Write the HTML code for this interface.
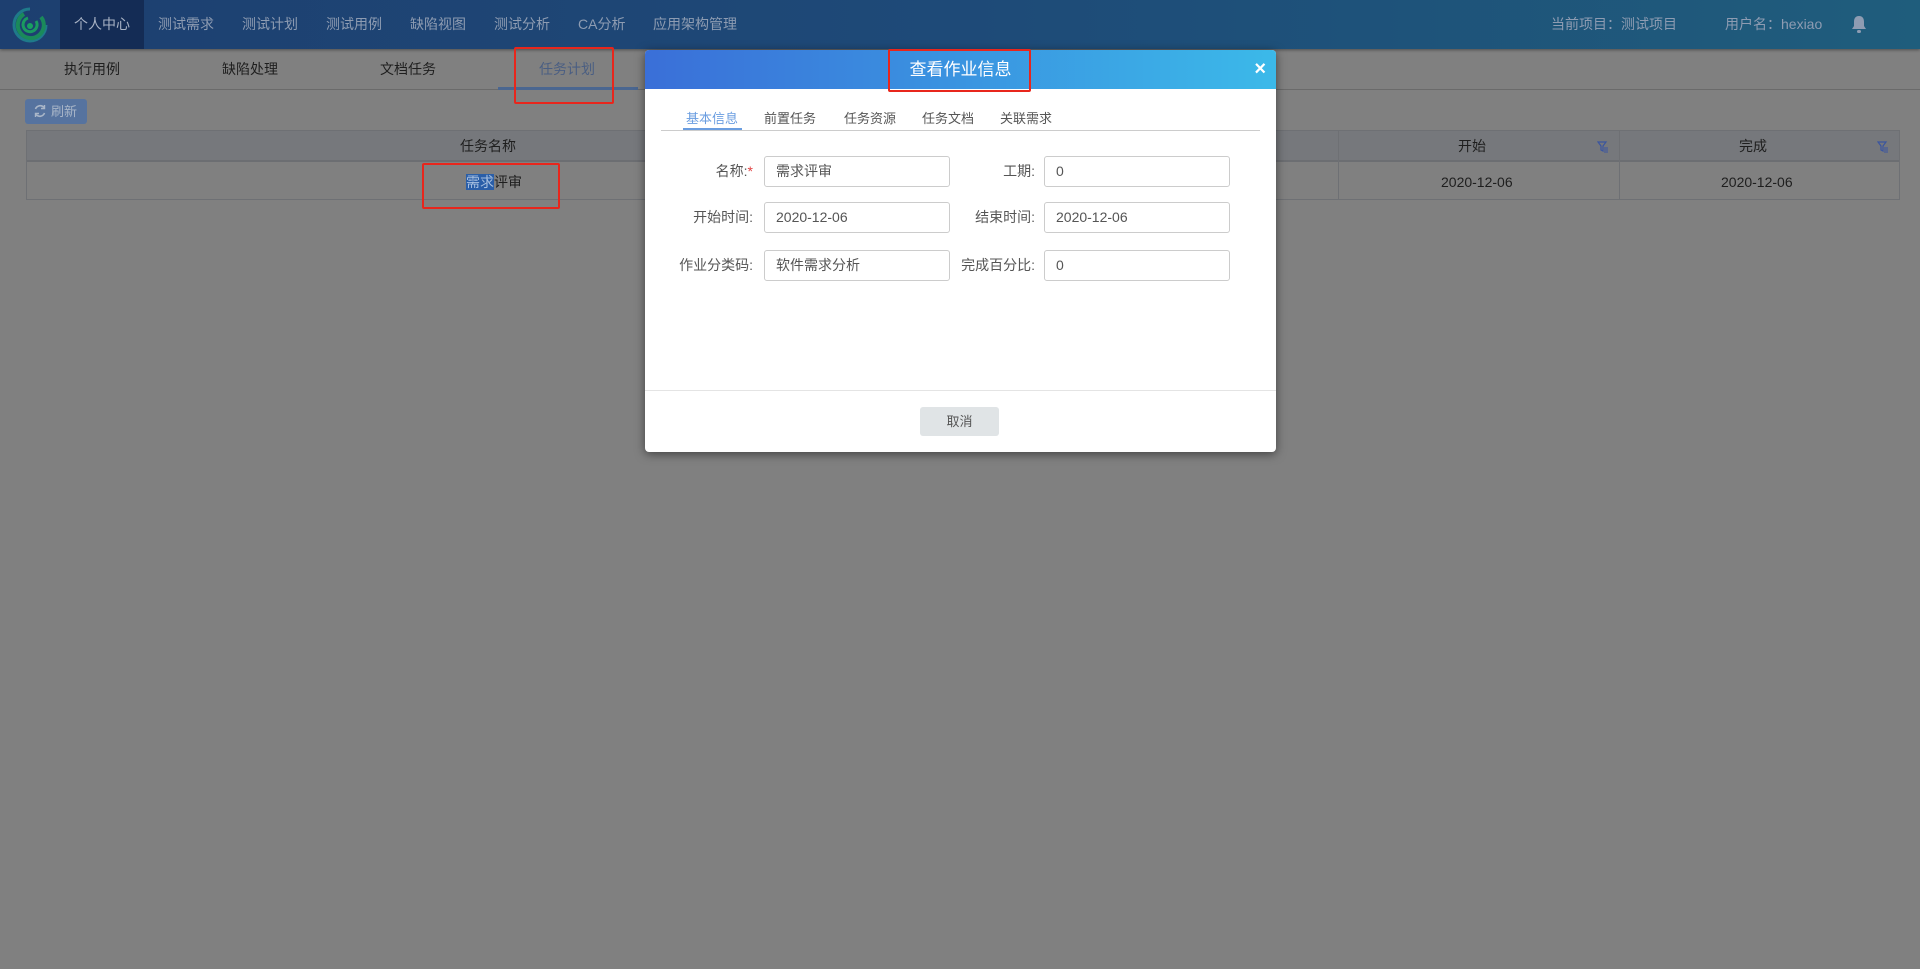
<!DOCTYPE html>
<html><head><meta charset="utf-8"><style>
*{margin:0;padding:0;box-sizing:border-box}
body{width:1920px;height:969px;background:#808080;font-family:"Liberation Sans","Noto Sans CJK SC",sans-serif;position:relative;overflow:hidden;font-size:14px}
.nav{position:absolute;left:0;top:0;width:1920px;height:49px;background:linear-gradient(90deg,#1d3f70 0%,#1e4a78 50%,#1f5d7c 100%);box-shadow:0 1px 3px rgba(0,0,0,.4)}
.nav .it{position:absolute;top:0;height:49px;line-height:48px;color:#8e9cb2;font-size:14px}
.act{position:absolute;left:60px;top:0;width:84px;height:49px;background:#142c55}
.sub{position:absolute;top:49px;height:40px;line-height:40px;width:158px;text-align:center;color:#1e1e1e;font-size:14px}
.abs{position:absolute}
.modal{position:absolute;left:645px;top:50px;width:631px;height:402px;background:#fff;border-radius:4px;box-shadow:0 2px 10px rgba(0,0,0,.5);overflow:hidden}
.mh{height:39px;background:linear-gradient(90deg,#3a6fd8,#3bb9e9);color:#fff;text-align:center;line-height:39px;font-size:17px}
.lbl{position:absolute;text-align:right;width:140px;color:#555;font-size:14px;line-height:31px}
.inp{position:absolute;width:186px;height:31px;border:1px solid #ccc;border-radius:3px;line-height:29px;padding-left:11px;color:#555;font-size:14px}
.red{position:absolute;border:2px solid #e8261c;border-radius:2px}
.tb{position:absolute;top:58px;color:#555;font-size:13px}
</style></head><body>
<div class="nav">
<svg class="abs" style="left:10px;top:5px" width="40" height="40" viewBox="0 0 40 40"><path d="M20 4 A16 16 0 1 0 36 20" fill="none" stroke="#1f7a8a" stroke-width="3"/><path d="M31 12 A13 13 0 1 1 14 9" fill="none" stroke="#1a8a5a" stroke-width="4"/><path d="M26 16 A7 7 0 1 1 18 13" fill="none" stroke="#1a9a60" stroke-width="3"/><circle cx="20" cy="21" r="3" fill="#18a060"/></svg>
<div class="act"></div>
<div class="it" style="left:74px;color:#a8b2c4">个人中心</div>
<div class="it" style="left:158px">测试需求</div>
<div class="it" style="left:242px">测试计划</div>
<div class="it" style="left:326px">测试用例</div>
<div class="it" style="left:410px">缺陷视图</div>
<div class="it" style="left:494px">测试分析</div>
<div class="it" style="left:578px">CA分析</div>
<div class="it" style="left:653px">应用架构管理</div>
<div class="it" style="left:1551px">当前项目：测试项目</div>
<div class="it" style="left:1725px">用户名：hexiao</div>
<svg class="abs" style="left:1851px;top:15px" width="16" height="19" viewBox="0 0 16 19"><path d="M8 1 C4 1 3 4 3 7 V11 L1 14 H15 L13 11 V7 C13 4 12 1 8 1Z" fill="#8e9cb2"/><rect x="6" y="15" width="4" height="3" rx="1.5" fill="#8e9cb2"/></svg>
</div>
<div class="sub" style="left:13px">执行用例</div>
<div class="sub" style="left:171px">缺陷处理</div>
<div class="sub" style="left:329px">文档任务</div>
<div class="sub" style="left:488px;color:#4a5e82">任务计划</div>
<div class="abs" style="left:0;top:89px;width:1920px;height:1px;background:#6a6a6a"></div>
<div class="abs" style="left:498px;top:87px;width:140px;height:3px;background:#4a6690"></div>
<div class="abs" style="left:25px;top:99px;width:62px;height:25px;background:#56739f;border-radius:3px;color:#a9b6c8;font-size:13px;line-height:25px;padding-left:26px">刷新</div>
<svg class="abs" style="left:33px;top:104px" width="14" height="14" viewBox="0 0 14 14"><path d="M2.5 5 A5 5 0 0 1 11 3.5 M11.5 9 A5 5 0 0 1 3 10.5" fill="none" stroke="#a9b6c8" stroke-width="1.6"/><path d="M11.5 1 V4.5 H8 M2.5 13 V9.5 H6" fill="none" stroke="#a9b6c8" stroke-width="1.4"/></svg>
<div class="abs" style="left:26px;top:130px;width:1874px;height:70px;border:1px solid #6e7074"></div>
<div class="abs" style="left:27px;top:131px;width:1872px;height:31px;background:#76787c;border-bottom:2px solid #6c6e72"></div>
<div class="abs" style="left:1338px;top:131px;width:1px;height:69px;background:#6e7074"></div>
<div class="abs" style="left:1619px;top:131px;width:1px;height:69px;background:#6e7074"></div>
<div class="abs" style="left:460px;top:131px;line-height:31px;color:#1e1e1e">任务名称</div>
<div class="abs" style="left:1458px;top:131px;line-height:31px;color:#1e1e1e">开始</div>
<div class="abs" style="left:1739px;top:131px;line-height:31px;color:#1e1e1e">完成</div>
<svg class="abs" style="left:1597px;top:141px" width="12" height="12" viewBox="0 0 12 12"><path d="M1 1 H9 L6 5 V10 L4 9 V5 Z" fill="none" stroke="#3a55a0" stroke-width="1.2"/><path d="M7 7 H11 M7 9 H11 M7 11 H11" stroke="#3a55a0"/></svg>
<svg class="abs" style="left:1877px;top:141px" width="12" height="12" viewBox="0 0 12 12"><path d="M1 1 H9 L6 5 V10 L4 9 V5 Z" fill="none" stroke="#3a55a0" stroke-width="1.2"/><path d="M7 7 H11 M7 9 H11 M7 11 H11" stroke="#3a55a0"/></svg>
<div class="abs" style="left:466px;top:164px;line-height:36px;color:#1e1e1e"><span style="background:#2a5ea8;color:#a8c0e0">需求</span>评审</div>
<div class="abs" style="left:1441px;top:164px;line-height:36px;color:#1e1e1e">2020-12-06</div>
<div class="abs" style="left:1721px;top:164px;line-height:36px;color:#1e1e1e">2020-12-06</div>
<div class="red" style="left:422px;top:163px;width:138px;height:46px"></div>
<div class="red" style="left:514px;top:47px;width:100px;height:57px"></div>
<div class="modal">
<div class="mh">查看作业信息</div>
<div class="abs" style="right:10px;top:0;line-height:39px;color:#fff;font-size:20px;font-weight:bold">×</div>
<div class="abs" style="left:16px;top:80px;width:599px;height:1px;background:#ccc"></div>
<div class="abs" style="left:38px;top:78px;width:59px;height:2px;background:#6a9de0"></div>
<div class="tb" style="left:41px;color:#6a9de0">基本信息</div>
<div class="tb" style="left:119px">前置任务</div>
<div class="tb" style="left:199px">任务资源</div>
<div class="tb" style="left:277px">任务文档</div>
<div class="tb" style="left:355px">关联需求</div>
<div class="lbl" style="left:-32px;top:106px">名称:<span style="color:#e04040">*</span></div>
<div class="inp" style="left:119px;top:106px">需求评审</div>
<div class="lbl" style="left:-32px;top:152px">开始时间:</div>
<div class="inp" style="left:119px;top:152px">2020-12-06</div>
<div class="lbl" style="left:-32px;top:200px">作业分类码:</div>
<div class="inp" style="left:119px;top:200px">软件需求分析</div>
<div class="lbl" style="left:250px;top:106px">工期:</div>
<div class="inp" style="left:399px;top:106px">0</div>
<div class="lbl" style="left:250px;top:152px">结束时间:</div>
<div class="inp" style="left:399px;top:152px">2020-12-06</div>
<div class="lbl" style="left:250px;top:200px">完成百分比:</div>
<div class="inp" style="left:399px;top:200px">0</div>
<div class="abs" style="left:0;top:340px;width:631px;height:1px;background:#e4e4e4"></div>
<div class="abs" style="left:275px;top:357px;width:79px;height:29px;background:#e0e4e6;border-radius:3px;text-align:center;line-height:29px;color:#555;font-size:13px">取消</div>
</div>
<div class="red" style="left:888px;top:49px;width:143px;height:43px"></div>
</body></html>
